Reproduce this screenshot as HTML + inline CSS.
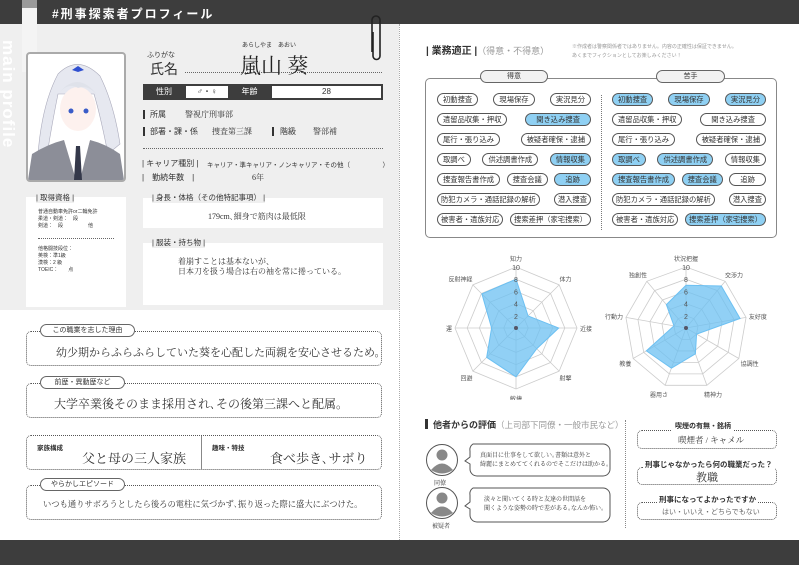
<!DOCTYPE html>
<html><head><meta charset="utf-8">
<style>
*{box-sizing:border-box;margin:0;padding:0}
body{width:799px;height:565px;overflow:hidden;background:#fff;font-family:"Liberation Sans","Noto Sans CJK JP",sans-serif;color:#333;position:relative}
.a{position:absolute}
.serif{font-family:"Liberation Serif","Noto Serif CJK SC",serif}
.pill{position:absolute;border:1px solid #666;border-radius:8px;background:#fff;font-size:7px;text-align:center;line-height:11px;height:13px}
.dbox{position:absolute;border:1px dotted #555;border-radius:5px;background:#fff}
.tagrow{position:absolute;display:flex;justify-content:space-between;font-size:7.3px;height:13px}
.tag{border:1px solid #555;border-radius:7px;padding:0 5px;line-height:11px;height:13px;background:#fff;white-space:nowrap}
.tag.b{background:#8fd0f3}
</style></head><body>
<div class="a" style="left:0;top:0;width:799px;height:24px;background:#3d3d3d"></div>
<div class="a" style="left:0;top:24px;width:399px;height:286px;background:#efefef"></div>
<div class="a" style="left:22px;top:0;width:15px;height:72px;background:#f4f4f4"></div>
<div class="a" style="left:22px;top:0;width:15px;height:8px;background:#9a9a9a"></div>
<div class="a" style="left:52px;top:5px;color:#fff;font-size:12px;letter-spacing:2px;font-weight:bold">#刑事探索者プロフィール</div>
<div class="a" style="left:0;top:40px;width:18px;height:140px;color:#fff;font-weight:bold;font-size:17px;writing-mode:vertical-rl;letter-spacing:1px">main profile</div>
<svg class="a" style="left:368px;top:12px" width="16" height="50"><path d="M4 40 V8 a4 4 0 0 1 8 0 V44 a3.5 3.5 0 0 1 -7 0 V20" fill="none" stroke="#222" stroke-width="1.6"/></svg>
<div class="a" style="left:399px;top:24px;height:516px;border-left:1px dotted #aaa"></div>
<div class="a" style="left:0;top:540px;width:799px;height:25px;background:#3d3d3d"></div>

<div class="a" style="left:26px;top:52px;width:100px;height:130px;border:2px solid #aaa;border-radius:4px;background:#fff;overflow:hidden">
<svg width="96" height="126" viewBox="0 0 96 126">
<path d="M30 20 Q50 0 72 22 Q86 50 92 90 L80 100 Q72 60 66 40 L30 40 Q24 70 20 95 L10 100 Q14 50 30 20Z" fill="#e6e8f0" stroke="#aab" stroke-width=".6"/>
<ellipse cx="50" cy="55" rx="18" ry="22" fill="#fdf1ee"/>
<path d="M30 40 Q50 15 70 42 Q60 30 50 34 Q40 28 30 40Z" fill="#dfe2ea"/>
<circle cx="43" cy="57" r="2.5" fill="#3a5cc8"/><circle cx="58" cy="57" r="2.5" fill="#3a5cc8"/>
<path d="M44 16 l6 -4 l6 4 l-6 2z" fill="#3050d0"/>
<path d="M0 126 L4 100 Q20 90 36 86 L48 126Z" fill="#8c8e98"/>
<path d="M96 126 L92 100 Q78 90 62 86 L52 126Z" fill="#8c8e98"/>
<path d="M38 86 L50 126 L62 86 Q50 80 38 86Z" fill="#fff"/>
<path d="M48 92 L52 92 L54 126 L46 126Z" fill="#34384a"/>
</svg></div>

<div class="a" style="left:147px;top:50px;font-size:7px">ふりがな</div>
<div class="a" style="left:150px;top:59px;font-size:14px">氏名</div>
<div class="a" style="left:242px;top:40px;font-size:6px">あらしやま　あおい</div>
<div class="a serif" style="left:240px;top:50px;font-size:21px;color:#222">嵐山 葵</div>
<div class="a" style="left:185px;top:72px;width:197px;border-top:1px dotted #666"></div>

<div class="a" style="left:143px;top:84px;width:240px;height:16px;background:#3d3d3d"></div>
<div class="a" style="left:143px;top:84px;width:42px;height:16px;color:#fff;font-size:8px;text-align:center;line-height:16px">性別</div>
<div class="a" style="left:186px;top:86px;width:42px;height:12px;background:#fff;font-size:8px;text-align:center;line-height:12px">♂・♀</div>
<div class="a" style="left:228px;top:84px;width:43px;height:16px;color:#fff;font-size:8px;text-align:center;line-height:16px">年齢</div>
<div class="a" style="left:272px;top:86px;width:109px;height:12px;background:#fff;font-size:8px;text-align:center;line-height:12px">28</div>

<div class="a" style="left:143px;top:110px;width:2px;height:9px;background:#333"></div>
<div class="a" style="left:150px;top:109px;font-size:8px">所属</div>
<div class="a serif" style="left:185px;top:109px;font-size:8px">警視庁刑事部</div>
<div class="a" style="left:143px;top:127px;width:2px;height:9px;background:#333"></div>
<div class="a" style="left:150px;top:126px;font-size:8px">部署・課・係</div>
<div class="a serif" style="left:212px;top:126px;font-size:8px">捜査第三課</div>
<div class="a" style="left:272px;top:127px;width:2px;height:9px;background:#333"></div>
<div class="a" style="left:280px;top:126px;font-size:8px">階級</div>
<div class="a serif" style="left:313px;top:126px;font-size:8px">警部補</div>
<div class="a" style="left:143px;top:148px;width:240px;border-top:1px dotted #666"></div>
<div class="a" style="left:142px;top:158px;font-size:8px">| キャリア種別 |</div>
<div class="a" style="left:207px;top:159px;font-size:6.5px">キャリア・準キャリア・ノンキャリア・その他（　　　　　）</div>
<div class="a" style="left:142px;top:172px;font-size:8px">|　勤続年数　|</div>
<div class="a serif" style="left:252px;top:172px;font-size:8px">6年</div>

<div class="a" style="left:26px;top:197px;width:100px;height:110px;background:#fff"></div>
<div class="a" style="left:36px;top:192px;font-size:7.5px;background:#efefef">| 取得資格 |</div>
<div class="a" style="left:38px;top:209px;font-size:5px;line-height:7px">普通自動車免許or二輪免許<br>柔道・剣道：　段<br>剣道：　段　　　　　他</div>
<div class="a" style="left:38px;top:238px;width:76px;border-top:1px dotted #666"></div>
<div class="a" style="left:38px;top:246px;font-size:5px;line-height:7px">他格闘技段位：<br>英検：準1級<br>漢検：2 級<br>TOEIC：　　点</div>

<div class="a" style="left:143px;top:198px;width:240px;height:30px;background:#fff"></div>
<div class="a" style="left:152px;top:192px;font-size:7.5px;background:#efefef">| 身長・体格（その他特記事項） |</div>
<div class="a serif" style="left:208px;top:211px;font-size:8px">179cm､細身で筋肉は最低限</div>
<div class="a" style="left:143px;top:243px;width:240px;height:62px;background:#fff"></div>
<div class="a" style="left:152px;top:237px;font-size:7.5px;background:#efefef">| 服装・持ち物 |</div>
<div class="a serif" style="left:178px;top:257px;font-size:8px;line-height:10px">着崩すことは基本ないが、<br>日本刀を扱う場合は右の袖を常に捲っている。</div>

<div class="dbox" style="left:26px;top:331px;width:356px;height:35px"></div>
<div class="pill" style="left:40px;top:324px;width:95px">この職業を志した理由</div>
<div class="a serif" style="left:56px;top:344px;font-size:11px">幼少期からふらふらしていた葵を心配した両親を安心させるため。</div>
<div class="dbox" style="left:26px;top:383px;width:356px;height:35px"></div>
<div class="pill" style="left:40px;top:376px;width:85px">前歴・異動歴など</div>
<div class="a serif" style="left:54px;top:395px;font-size:12px">大学卒業後そのまま採用され､その後第三課へと配属。</div>
<div class="dbox" style="left:26px;top:435px;width:356px;height:35px"></div>
<div class="a" style="left:201px;top:436px;height:33px;border-left:1px solid #888"></div>
<div class="a" style="left:37px;top:442px;font-size:6.5px;font-weight:bold">家族構成</div>
<div class="a serif" style="left:82px;top:448px;font-size:13px">父と母の三人家族</div>
<div class="a" style="left:212px;top:442px;font-size:6.5px;font-weight:bold">趣味・特技</div>
<div class="a serif" style="left:270px;top:448px;font-size:13px">食べ歩き､サボり</div>
<div class="dbox" style="left:26px;top:485px;width:356px;height:35px"></div>
<div class="pill" style="left:40px;top:478px;width:85px">やらかしエピソード</div>
<div class="a serif" style="left:43px;top:498px;font-size:8.3px">いつも通りサボろうとしたら後ろの電柱に気づかず､振り返った際に盛大にぶつけた。</div>

<div class="a" style="left:426px;top:42px;font-size:10px;font-weight:bold">| 業務適正 |<span style="font-weight:normal;color:#999;font-size:9px">（得意・不得意）</span></div>
<div class="a" style="left:572px;top:43px;font-size:5px;color:#999;line-height:9px">※作成者は警察関係者ではありません。内容の正確性は保証できません。<br>あくまでフィクションとしてお楽しみください！</div>
<div class="a" style="left:425px;top:78px;width:352px;height:160px;border:1px solid #888;border-radius:5px"></div>
<div class="pill" style="left:480px;top:70px;width:68px;background:#f2f2f2">得意</div>
<div class="pill" style="left:656px;top:70px;width:69px;background:#f2f2f2">苦手</div>
<div class="a" style="left:601px;top:95px;height:135px;border-left:1px dotted #777"></div>

<div class="tagrow" style="left:437px;top:93px;width:154px"><span class="tag">初動捜査</span><span class="tag">現場保存</span><span class="tag">実況見分</span></div>
<div class="tagrow" style="left:437px;top:113px;width:154px"><span class="tag">遺留品収集・押収</span><span class="tag b" style="padding:0 10px">聞き込み捜査</span></div>
<div class="tagrow" style="left:437px;top:133px;width:154px"><span class="tag">尾行・張り込み</span><span class="tag">被疑者確保・逮捕</span></div>
<div class="tagrow" style="left:437px;top:153px;width:154px"><span class="tag">取調べ</span><span class="tag">供述調書作成</span><span class="tag b">情報収集</span></div>
<div class="tagrow" style="left:437px;top:173px;width:154px"><span class="tag">捜査報告書作成</span><span class="tag">捜査会議</span><span class="tag b" style="padding:0 10px">追跡</span></div>
<div class="tagrow" style="left:437px;top:193px;width:154px"><span class="tag" style="padding:0 3px">防犯カメラ・通話記録の解析</span><span class="tag" style="padding:0 3px">潜入捜査</span></div>
<div class="tagrow" style="left:437px;top:213px;width:154px"><span class="tag" style="padding:0 3px">被害者・遺族対応</span><span class="tag" style="padding:0 3px">捜索差押（家宅捜索）</span></div>

<div class="tagrow" style="left:612px;top:93px;width:154px"><span class="tag b">初動捜査</span><span class="tag b">現場保存</span><span class="tag b">実況見分</span></div>
<div class="tagrow" style="left:612px;top:113px;width:154px"><span class="tag">遺留品収集・押収</span><span class="tag" style="padding:0 10px">聞き込み捜査</span></div>
<div class="tagrow" style="left:612px;top:133px;width:154px"><span class="tag">尾行・張り込み</span><span class="tag">被疑者確保・逮捕</span></div>
<div class="tagrow" style="left:612px;top:153px;width:154px"><span class="tag b">取調べ</span><span class="tag b">供述調書作成</span><span class="tag">情報収集</span></div>
<div class="tagrow" style="left:612px;top:173px;width:154px"><span class="tag b">捜査報告書作成</span><span class="tag b">捜査会議</span><span class="tag" style="padding:0 10px">追跡</span></div>
<div class="tagrow" style="left:612px;top:193px;width:154px"><span class="tag" style="padding:0 3px">防犯カメラ・通話記録の解析</span><span class="tag" style="padding:0 3px">潜入捜査</span></div>
<div class="tagrow" style="left:612px;top:213px;width:154px"><span class="tag" style="padding:0 3px">被害者・遺族対応</span><span class="tag b" style="padding:0 3px">捜索差押（家宅捜索）</span></div>

<svg id="radar" class="a" style="left:400px;top:250px" width="399" height="150"></svg>

<div class="a" style="left:425px;top:419px;width:3px;height:10px;background:#333"></div>
<div class="a" style="left:433px;top:418px;font-size:9px;font-weight:bold">他者からの評価<span style="font-weight:normal;color:#999;font-size:8.5px">（上司部下同僚・一般市民など）</span></div>
<svg class="a" style="left:425px;top:443px" width="34" height="90">
<circle cx="17" cy="17" r="15.5" fill="#fff" stroke="#555"/><circle cx="17" cy="12" r="5.5" fill="#888"/><path d="M6 27 Q17 14 28 27 Q17 34 6 27Z" fill="#888"/>
<circle cx="17" cy="60" r="15.5" fill="#fff" stroke="#555"/><circle cx="17" cy="55" r="5.5" fill="#888"/><path d="M6 70 Q17 57 28 70 Q17 77 6 70Z" fill="#888"/>
</svg>
<div class="a serif" style="left:434px;top:478px;font-size:6px">同僚</div>
<div class="a serif" style="left:432px;top:521px;font-size:6px">被疑者</div>
<svg class="a" style="left:463px;top:443px" width="150" height="82">
<path d="M10 1 H140 a7 7 0 0 1 7 7 V26 a7 7 0 0 1 -7 7 H14 a7 7 0 0 1 -7 -7 V21 L2 18 L7 14 V8 a7 7 0 0 1 3 -7Z" fill="#fff" stroke="#555"/>
<path d="M10 45 H140 a7 7 0 0 1 7 7 V72 a7 7 0 0 1 -7 7 H14 a7 7 0 0 1 -7 -7 V66 L2 63 L7 59 V52 a7 7 0 0 1 3 -7Z" fill="#fff" stroke="#555"/>
</svg>
<div class="a serif" style="left:480px;top:452px;font-size:6px;line-height:9px">真面目に仕事をして欲しい｡書類は意外と<br>綺麗にまとめててくれるのでそこだけは助かる。</div>
<div class="a serif" style="left:484px;top:496px;font-size:6px;line-height:9px">淡々と聞いてくる時と友達の世間話を<br>聞くような姿勢の時で差がある｡なんか怖い。</div>
<div class="a" style="left:625px;top:420px;height:108px;border-left:1px dotted #888"></div>

<div class="dbox" style="left:637px;top:430px;width:140px;height:19px"></div>
<div class="a" style="left:672px;top:421px;font-size:7px;font-weight:bold;background:#fff;padding:0 3px">喫煙の有無・銘柄</div>
<div class="a serif" style="left:678px;top:434px;font-size:8.5px">喫煙者 / キャメル</div>
<div class="dbox" style="left:637px;top:467px;width:140px;height:18px"></div>
<div class="a" style="left:643px;top:459px;font-size:7.5px;font-weight:bold;background:#fff;padding:0 2px">刑事じゃなかったら何の職業だった？</div>
<div class="a serif" style="left:696px;top:469px;font-size:11px">教職</div>
<div class="dbox" style="left:637px;top:502px;width:140px;height:18px"></div>
<div class="a" style="left:657px;top:494px;font-size:7.5px;font-weight:bold;background:#fff;padding:0 2px">刑事になってよかったですか</div>
<div class="a" style="left:662px;top:507px;font-size:7px;color:#666">はい・いいえ・どちらでもない</div>

<script>
var s=document.getElementById('radar'),h='';
function radar(cx,cy,R,labels,vals){
 var n=labels.length,i,k;
 function pt(i,r){var a=-Math.PI/2+i*2*Math.PI/n;return [cx+r*Math.cos(a),cy+r*Math.sin(a)];}
 for(k=1;k<=5;k++){var p=[];for(i=0;i<n;i++)p.push(pt(i,R*k/5).join(','));h+='<polygon points="'+p.join(' ')+'" fill="none" stroke="#ccc" stroke-width="0.8"/>';}
 for(i=0;i<n;i++){var e=pt(i,R);h+='<line x1="'+cx+'" y1="'+cy+'" x2="'+e[0]+'" y2="'+e[1]+'" stroke="#ccc" stroke-width="0.8"/>';}
 var p=[];for(i=0;i<n;i++)p.push(pt(i,R*vals[i]/10).join(','));
 h+='<polygon points="'+p.join(' ')+'" fill="#6cc0f2" fill-opacity="0.75" stroke="#6cc0f2"/>';
 h+='<circle cx="'+cx+'" cy="'+cy+'" r="2" fill="#556"/>';
 for(k=1;k<=5;k++)h+='<text x="'+(cx)+'" y="'+(cy-R*k/5+3)+'" font-size="7" fill="#555" text-anchor="middle">'+(k*2)+'</text>';
 for(i=0;i<n;i++){var e=pt(i,R+9),a=Math.cos(-Math.PI/2+i*2*Math.PI/n);var an=Math.abs(a)<0.2?'middle':(a>0?'start':'end');
  var dx=Math.abs(a)<0.2?0:(a>0?-6:6);
  h+='<text x="'+(e[0]+dx)+'" y="'+(e[1]+3)+'" font-size="6" fill="#555" text-anchor="'+an+'">'+labels[i]+'</text>';}
}
radar(116,78,61,['知力','体力','近接','射撃','敏捷','回避','運','反射神経'],[8,2.8,7,4.8,8,6.8,4,7.9]);
radar(286,78,61,['状況把握','交渉力','友好度','協調性','精神力','器用さ','教養','行動力','独創性'],[7,9,9,2,4.5,7,7.5,2,5]);
s.innerHTML=h;
</script>
</body></html>
